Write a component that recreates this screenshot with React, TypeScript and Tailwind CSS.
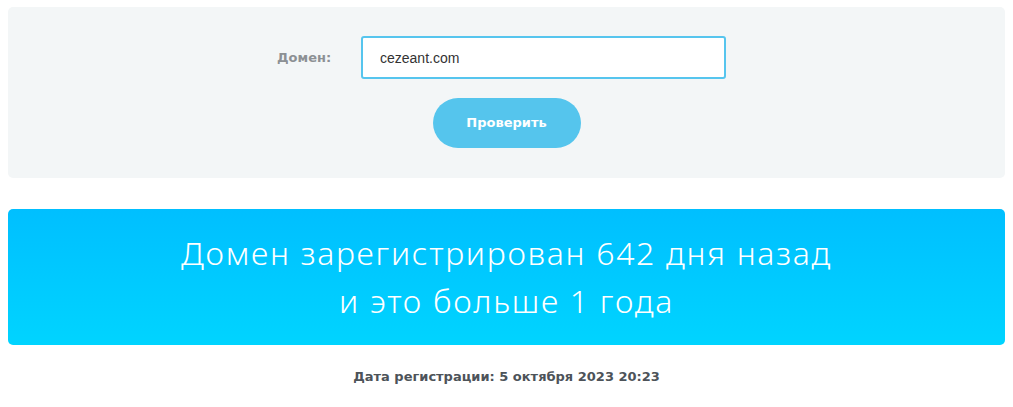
export default function App() {
  return (
    <div className="px-2 pt-[7px] font-['DejaVu_Sans','Noto_Sans',sans-serif]">
      <div className="flex h-[171px] flex-col items-center rounded-[5px] bg-[#f3f6f7] pt-[29px]">
        <div className="mr-[10px] flex items-center">
          <label className="w-[84px] pr-[33px] text-right text-[13px] font-bold text-[#8c9094]">
            Домен:
          </label>
          <input
            defaultValue="cezeant.com"
            className="h-[43px] w-[365px] rounded-[3px] border-2 border-[#56c5ee] bg-white px-[17px] font-['Liberation_Sans',sans-serif] text-[14px] text-[#333] outline-none"
          />
        </div>
        <button className="mt-[19px] h-[50px] w-[148px] rounded-full bg-[#55c5ed] text-[13px] font-bold text-white">
          Проверить
        </button>
      </div>
      <div className="mt-[31px] flex h-[136px] flex-col items-center justify-center rounded-[5px] bg-gradient-to-b from-[#00bfff] to-[#00d4ff] text-center font-['Noto_Sans',sans-serif] text-[32px] font-light leading-[48px] tracking-[1.7px] text-white">
        <div>Домен зарегистрирован 642 дня назад</div>
        <div>и это больше 1 года</div>
      </div>
      <div className="mt-[22px] text-center text-[13px] font-bold text-[#4d5359]">
        Дата регистрации: 5 октября 2023 20:23
      </div>
    </div>
  );
}
